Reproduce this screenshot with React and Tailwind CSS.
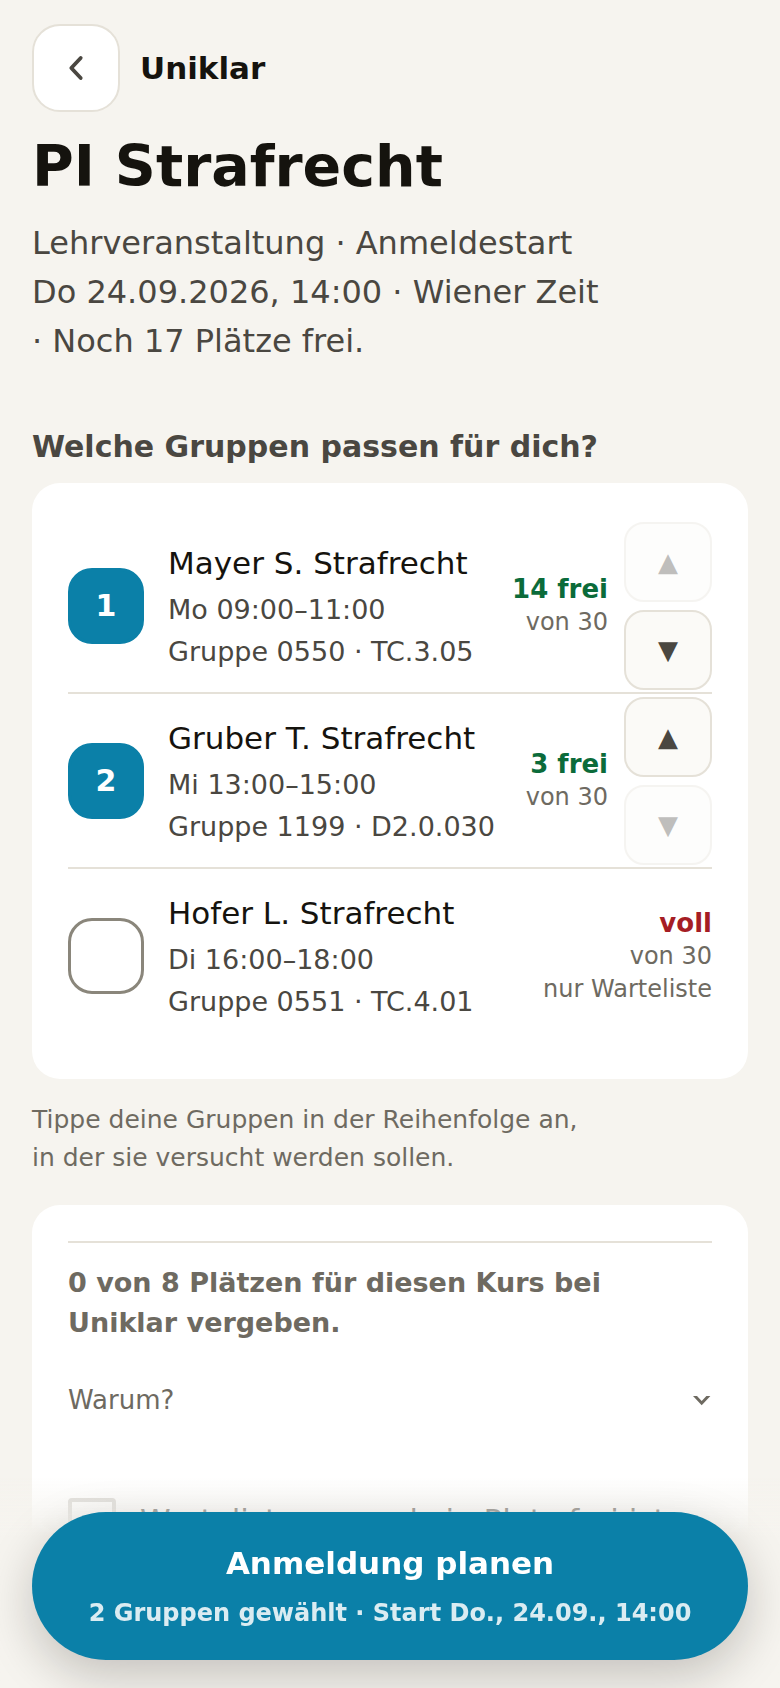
import { useState } from "react";
import clsx from "clsx";

const GROUPS = [
    { id: "0550", name: "Mayer S. Strafrecht", time: "Mo 09:00–11:00", room: "TC.3.05", free: 14, total: 30 },
    { id: "1199", name: "Gruber T. Strafrecht", time: "Mi 13:00–15:00", room: "D2.0.030", free: 3, total: 30 },
    { id: "0551", name: "Hofer L. Strafrecht", time: "Di 16:00–18:00", room: "TC.4.01", free: 0, total: 30 },
];

function MoveButton({ label, disabled, onClick, children }) {
    return (
        <button
            type="button"
            aria-label={label}
            disabled={disabled}
            onClick={onClick}
            className="flex h-20 w-[88px] items-center justify-center rounded-[20px] border-2 border-[#e5e1d8] bg-[#fbfaf7] text-[26px] leading-8 text-[#4a4741] disabled:opacity-35"
        >
            {children}
        </button>
    );
}

function Availability({ free, total }) {
    return (
        <div className="text-right text-[24px] leading-[33px] whitespace-nowrap text-[#6e6a61]">
            <strong className={clsx("block text-[26px] font-bold", free ? "text-[#0b6b3a]" : "text-[#a51d24]")}>
                {free ? `${free} frei` : "voll"}
            </strong>
            <span className="block">von {total}</span>
            {!free && <span className="block">nur Warteliste</span>}
        </div>
    );
}

function GroupRow({ group, rank, count, onToggle, onMove }) {
    const picked = rank > 0;
    const inputId = `group-${group.id}`;

    return (
        <li className="flex min-h-[175px] items-center gap-4 border-b-2 border-[#e5e1d8] last:min-h-[174px] last:border-b-0">
            <div className="flex min-w-0 flex-1 items-center gap-6">
                <div className="grid size-[76px] shrink-0 place-items-center">
                    <input
                        id={inputId}
                        type="checkbox"
                        checked={picked}
                        onChange={() => onToggle(group.id)}
                        className="col-start-1 row-start-1 size-[76px] appearance-none rounded-3xl border-3 border-[#8a867b] bg-white checked:border-[#0b80a8] checked:bg-[#0b80a8]"
                    />
                    {picked && (
                        <span className="pointer-events-none col-start-1 row-start-1 text-[30px] leading-9 font-bold text-white">
                            {rank}
                        </span>
                    )}
                </div>
                <label htmlFor={inputId} className="min-w-0 text-[27px] leading-[42px] text-[#4a4741]">
                    <span className="mb-0.5 block text-[31px] leading-[48px] text-[#15130e]">{group.name}</span>
                    <span className="block">{group.time}</span>
                    <span className="block whitespace-nowrap">
                        Gruppe {group.id} · {group.room}
                    </span>
                </label>
            </div>
            <Availability free={group.free} total={group.total} />
            {picked && (
                <div className="flex flex-col gap-2">
                    <MoveButton label={`${group.name} nach oben`} disabled={rank === 1} onClick={() => onMove(rank - 1, -1)}>
                        ▲
                    </MoveButton>
                    <MoveButton label={`${group.name} nach unten`} disabled={rank === count} onClick={() => onMove(rank - 1, 1)}>
                        ▼
                    </MoveButton>
                </div>
            )}
        </li>
    );
}

export default function App() {
    const [order, setOrder] = useState(["0550", "1199"]);
    const [waitlist, setWaitlist] = useState(false);

    const toggle = (id) => setOrder((prev) => (prev.includes(id) ? prev.filter((x) => x !== id) : [...prev, id]));

    const move = (index, step) =>
        setOrder((prev) => {
            const next = [...prev];
            [next[index], next[index + step]] = [next[index + step], next[index]];
            return next;
        });

    // picked groups first, in the order they will be tried
    const rows = [
        ...order.map((id) => GROUPS.find((g) => g.id === id)),
        ...GROUPS.filter((g) => !order.includes(g.id)),
    ];

    return (
        <div className="min-h-screen bg-[#f6f4ef] font-['DejaVu_Sans',sans-serif] text-[#15130e]">
            <main className="px-8 pt-6 pb-8">
                <header className="flex items-center gap-5">
                    <button
                        type="button"
                        aria-label="Zurück"
                        className="flex size-[88px] items-center justify-center rounded-[28px] border-2 border-[#e5e1d8] bg-white text-[#4a4741]"
                    >
                        <svg width="36" height="36" viewBox="0 0 36 36" fill="none" stroke="currentColor" strokeWidth="3.8" strokeLinecap="round" strokeLinejoin="round" aria-hidden="true">
                            <path d="M22.7 8 13.3 18l9.4 10" />
                        </svg>
                    </button>
                    <span className="text-[31px] leading-10 font-bold">Uniklar</span>
                </header>

                <h1 className="mt-[22px] text-[57px] leading-[64px] font-bold">PI Strafrecht</h1>
                <p className="mt-[21px] max-w-xl text-[32px] leading-[49px] text-[#4a4741]">
                    Lehrveranstaltung · Anmeldestart Do&nbsp;24.09.2026, 14:00 · Wiener Zeit · Noch 17 Plätze frei.
                </p>

                <h2 className="mt-[61px] text-[30px] leading-10 font-bold text-[#4a4741]">Welche Gruppen passen für dich?</h2>
                <ul className="mt-4 rounded-[28px] bg-white px-9 pt-9 pb-9">
                    {rows.map((group) => (
                        <GroupRow
                            key={group.id}
                            group={group}
                            rank={order.indexOf(group.id) + 1}
                            count={order.length}
                            onToggle={toggle}
                            onMove={move}
                        />
                    ))}
                </ul>
                <p className="mt-[22px] max-w-[560px] text-[25px] leading-[38px] text-[#6e6a61]">
                    Tippe deine Gruppen in der Reihenfolge an, in der sie versucht werden sollen.
                </p>

                <section className="mt-7 rounded-[28px] bg-white px-9 pt-9 pb-10">
                    <div className="border-t-2 border-[#e5e1d8] pt-5 text-[27px] leading-10 text-[#6e6a61]">
                        <p className="max-w-xl font-bold">0 von 8 Plätzen für diesen Kurs bei Uniklar vergeben.</p>
                        <details className="mt-[13px]">
                            <summary className="flex h-[88px] cursor-pointer list-none items-center justify-between text-[26px]">
                                Warum?
                                <svg width="20" height="20" viewBox="0 0 20 20" fill="currentColor" aria-hidden="true">
                                    <path d="M1 6h4l4.7 5 4.7-5h4L9.7 15.3z" />
                                </svg>
                            </summary>
                            <p className="pb-4">So bleiben die Chancen für alle fair.</p>
                        </details>
                    </div>
                    <div className="mt-[54px] flex items-start gap-6">
                        <input
                            id="waitlist"
                            type="checkbox"
                            checked={waitlist}
                            onChange={(e) => setWaitlist(e.target.checked)}
                            className="size-12 shrink-0 appearance-none rounded-[4px] border-4 border-[#d8d6d2] bg-white checked:bg-[#0b80a8]"
                        />
                        <label htmlFor="waitlist" className="text-[31px] leading-11 text-[#4a4741]">
                            Warteliste, wenn kein Platz frei ist
                        </label>
                    </div>
                </section>
            </main>

            {/* Sticky action, content fades out underneath */}
            <div className="fixed inset-x-0 bottom-0 bg-linear-to-b from-[#f6f4ef]/0 to-[#f6f4ef] to-28% px-8 pt-9 pb-7">
                <button
                    type="button"
                    className="flex h-[148px] w-full flex-col items-center justify-center gap-2.5 rounded-full bg-[#0b80a8] font-bold text-white shadow-[0_16px_48px_rgba(21,19,14,0.22)]"
                >
                    <span className="text-[31px] leading-11">Anmeldung planen</span>
                    <span className="text-[24px] leading-9 text-white/85">{order.length} Gruppen gewählt · Start Do., 24.09., 14:00</span>
                </button>
            </div>
        </div>
    );
}
